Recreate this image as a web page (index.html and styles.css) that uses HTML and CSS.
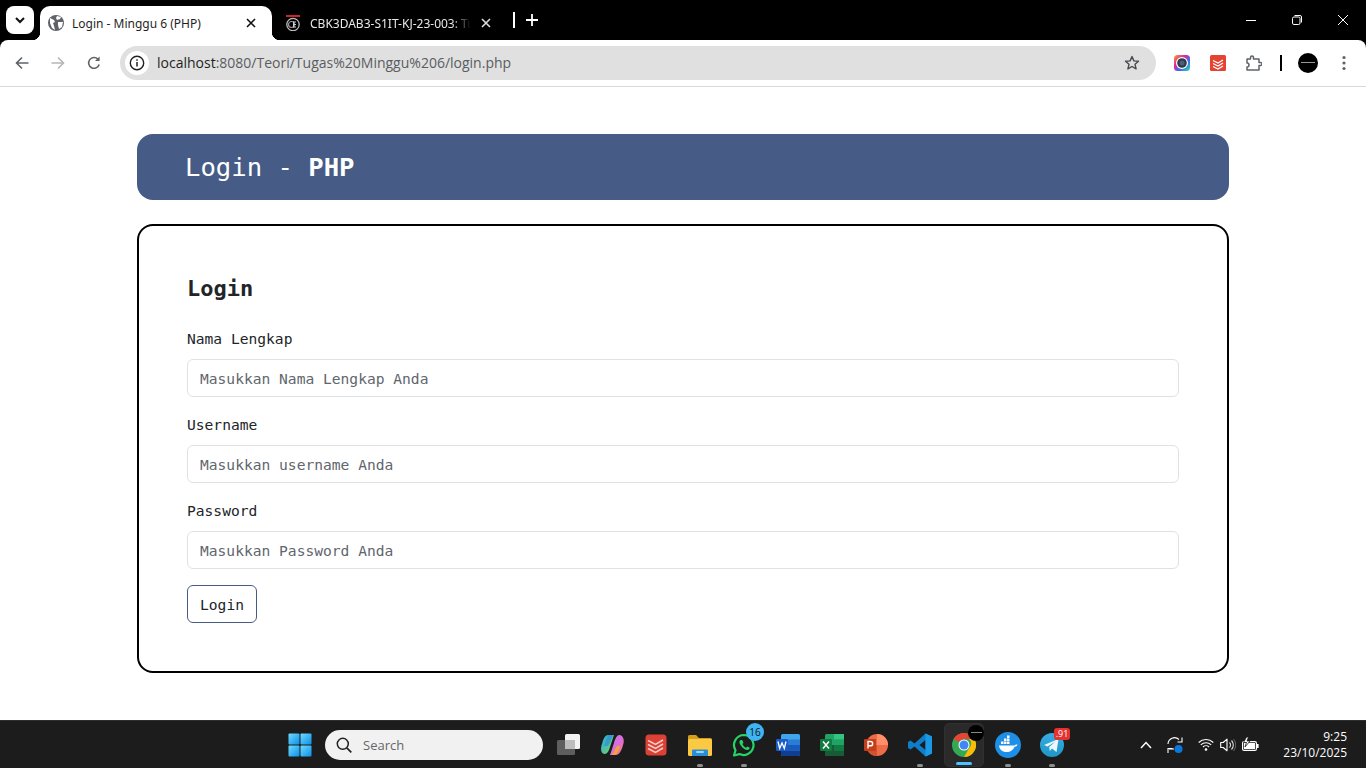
FILE: index.html
```html
<!DOCTYPE html>
<html lang="id">
<head>
<meta charset="utf-8">
<title>Login - Minggu 6 (PHP)</title>
<link rel="stylesheet" href="styles.css">
</head>
<body>
<div class="browser">
  <div class="tabstrip">
    <div class="tabsearch"><svg width="12" height="12" viewBox="0 0 12 12"><path d="M2 4l4 4 4-4" fill="none" stroke="#111" stroke-width="2"/></svg></div>
    <div class="tab active">
      <svg class="fav" width="16" height="16" viewBox="0 0 16 16"><circle cx="8" cy="8" r="8" fill="#5f6368"/><path d="M2 3l4 2 1 2-2 1 1 3 1 4-3-2-2-5zM9 1l4 1-1 2-3 1-1-2zM10 7l5 0-1 5-3 2-1-4z" fill="#fff"/></svg>
      <span class="tabtitle">Login - Minggu 6 (PHP)</span>
      <svg class="close" width="10" height="10" viewBox="0 0 10 10"><path d="M1 1l8 8M9 1l-8 8" stroke="#111" stroke-width="1.6"/></svg>
    </div>
    <div class="tab other">
      <svg class="fav" width="16" height="16" viewBox="0 0 16 16"><rect x="1" y="0" width="14" height="2" fill="#c8252c"/><circle cx="8" cy="9.5" r="6.2" fill="none" stroke="#bbb" stroke-width="1.3"/><circle cx="6.5" cy="9.5" r="3" fill="none" stroke="#999" stroke-width="1.2"/><path d="M8.5 6.5v6M8.5 7h2.5M8.5 9.5h2.5M8.5 12h2.5" stroke="#ccc" stroke-width="1"/></svg>
      <span class="tabtitle fade">CBK3DAB3-S1IT-KJ-23-003: Tugas</span>
      <svg class="close" width="10" height="10" viewBox="0 0 10 10"><path d="M1 1l8 8M9 1l-8 8" stroke="#ddd" stroke-width="1.6"/></svg>
    </div>
    <div class="tabsep"></div>
    <svg class="newtab" width="12" height="12" viewBox="0 0 12 12"><path d="M6 0v12M0 6h12" stroke="#fff" stroke-width="1.8"/></svg>
    <div class="winctl">
      <svg width="10" height="10" viewBox="0 0 10 10"><path d="M0 5.5h10" stroke="#fff" stroke-width="1"/></svg>
      <svg width="10" height="10" viewBox="0 0 10 10"><rect x=".5" y="2" width="7.5" height="7.5" rx="1.4" fill="none" stroke="#fff"/><path d="M2.5 .5h5.5a1.5 1.5 0 0 1 1.5 1.5v5.5" fill="none" stroke="#fff"/></svg>
      <svg width="10" height="10" viewBox="0 0 10 10"><path d="M0 0l10 10M10 0l-10 10" stroke="#fff" stroke-width="1"/></svg>
    </div>
  </div>
  <div class="toolbar">
    <div class="nav">
      <svg width="16" height="16" viewBox="0 0 16 16"><path d="M14.5 8H2.5M8 2.5L2.5 8 8 13.5" fill="none" stroke="#5f6368" stroke-width="1.6"/></svg>
      <svg width="16" height="16" viewBox="0 0 16 16"><path d="M1.5 8h12M8 2.5L13.5 8 8 13.5" fill="none" stroke="#b4b6b9" stroke-width="1.6"/></svg>
      <svg width="16" height="16" viewBox="0 0 16 16"><path d="M13.2 9.5A5.4 5.4 0 1 1 12 4.2" fill="none" stroke="#5f6368" stroke-width="1.6"/><path d="M13.6 1.5v4.6H9z" fill="#5f6368"/></svg>
    </div>
    <div class="omnibox">
      <div class="siteinfo"><svg width="16" height="16" viewBox="0 0 16 16"><circle cx="8" cy="8" r="6.7" fill="none" stroke="#222" stroke-width="1.4"/><path d="M8 7v4.5M8 4.2v1.6" stroke="#222" stroke-width="1.5"/></svg></div>
      <span class="url"><span class="host">localhost</span>:8080/Teori/Tugas%20Minggu%206/login.php</span>
      <svg class="star" width="16" height="16" viewBox="0 0 16 16"><path d="M8 1.6l1.9 4.3 4.6.4-3.5 3 1.1 4.6L8 11.5l-4.100 2.400 1.100-4.600-3.500-3 4.600-.4z" fill="none" stroke="#474a4e" stroke-width="1.4" stroke-linejoin="round"/></svg>
    </div>
    <div class="exts">
      <svg width="16" height="16" viewBox="0 0 16 16"><defs><linearGradient id="rb" x1="0" y1="0" x2="1" y2="1"><stop offset="0" stop-color="#f5a623"/><stop offset=".35" stop-color="#e6259b"/><stop offset=".65" stop-color="#3b6cf0"/><stop offset="1" stop-color="#2ee0a0"/></linearGradient></defs><rect width="16" height="16" rx="3.500" fill="url(#rb)"/><circle cx="8" cy="8" r="6" fill="#fff"/><circle cx="8" cy="8" r="4.800" fill="#2c3a4a"/><circle cx="8" cy="8" r="2.500" fill="#4b6076"/></svg>
      <svg width="16" height="16" viewBox="0 0 16 16"><rect width="16" height="16" rx="1.500" fill="#e44232"/><path d="M3 5.500l5 2.500 5-3M3 8.500l5 2.500 5-3M3 11.500l5 2.500 5-3" fill="none" stroke="#fff" stroke-width="1.200"/></svg>
      <svg width="16" height="16" viewBox="0 0 16 16"><path d="M1 4h3.500V2.500a1.500 1.500 0 0 1 3 0V4H13v3.500h1.500a1.500 1.500 0 0 1 0 3H13V15H1v-3a2 2 0 0 0 0-4z" fill="none" stroke="#5f6368" stroke-width="1.500" stroke-linejoin="round"/></svg>
      <div class="extsep"></div>
      <div class="avatar"><i></i></div>
      <svg width="4" height="16" viewBox="0 0 4 16"><circle cx="2" cy="2.500" r="1.600" fill="#5f6368"/><circle cx="2" cy="8" r="1.600" fill="#5f6368"/><circle cx="2" cy="13.500" r="1.600" fill="#5f6368"/></svg>
    </div>
  </div>
</div>

<main class="page">
  <div class="container">
    <header class="banner">Login - <b>PHP</b></header>
    <section class="card">
      <h2>Login</h2>
      <form>
        <label for="nama">Nama Lengkap</label>
        <input id="nama" type="text" placeholder="Masukkan Nama Lengkap Anda">
        <label for="user">Username</label>
        <input id="user" type="text" placeholder="Masukkan username Anda">
        <label for="pass">Password</label>
        <input id="pass" type="password" placeholder="Masukkan Password Anda">
        <button type="button">Login</button>
      </form>
    </section>
  </div>
</main>

<footer class="taskbar">
  <div class="slot">
    <svg width="24" height="24" viewBox="0 0 24 24"><defs><linearGradient id="win" x1="0" y1="0" x2="1" y2="1"><stop offset="0" stop-color="#6fdcff"/><stop offset="1" stop-color="#0c8fe8"/></linearGradient></defs><rect x="0.500" y="0.500" width="11" height="11" rx="1" fill="url(#win)"/><rect x="12.500" y="0.500" width="11" height="11" rx="1" fill="url(#win)"/><rect x="0.500" y="12.500" width="11" height="11" rx="1" fill="url(#win)"/><rect x="12.500" y="12.500" width="11" height="11" rx="1" fill="url(#win)"/></svg>
  </div>
  <div class="search">
    <svg width="16" height="16" viewBox="0 0 16 16"><circle cx="6.800" cy="6.800" r="5.500" fill="none" stroke="#222" stroke-width="1.500"/><path d="M10.800 10.800l4.500 4.500" stroke="#222" stroke-width="1.700"/></svg>
    <span>Search</span>
  </div>
  <div class="slot">
    <svg width="24" height="24" viewBox="0 0 24 24"><rect x="9" y="1" width="15" height="15" rx="1.500" fill="#f3f3f3"/><rect x="1" y="7" width="18" height="15" rx="1.500" fill="#5e5e5e"/><rect x="9" y="7" width="10" height="9" fill="#bdbdbd"/></svg>
  </div>
  <div class="slot">
    <svg width="24" height="24" viewBox="0 0 24 24"><defs><linearGradient id="cp1" x1="0" y1="0" x2="1" y2="1"><stop offset="0" stop-color="#1fa8e8"/><stop offset="1" stop-color="#7ed957"/></linearGradient><linearGradient id="cp2" x1="0" y1="0" x2="1" y2="1"><stop offset="0" stop-color="#b27cf5"/><stop offset=".6" stop-color="#e36bd2"/><stop offset="1" stop-color="#f9893b"/></linearGradient></defs><path d="M8 2h6l-4 12c-1 4-3 7-5 7-4 0-5-5-3-10C3 6 5 2 8 2z" fill="url(#cp1)"/><path d="M16 22h-6l4-12c1-4 3-8 5-8 4 0 6 5 4 10-1 5-4 10-7 10z" fill="url(#cp2)"/><path d="M8 2h7c-2 0-3 2-4 5l-3 6H4z" fill="#2a7de8" opacity=".55"/><path d="M11 21c2 0 3-2 4-5l2-3h3c-1 4-3 9-6 9z" fill="#f5a13b"/></svg>
  </div>
  <div class="slot">
    <svg width="22" height="22" viewBox="0 0 22 22"><rect width="21" height="21" x=".500" y=".500" rx="3.500" fill="#dd4035"/><path d="M3 6.500l7.500 4 7.500-4.500M3 10.500l7.500 4 7.500-4.500M3 14.500l7.500 4 7.500-4.500" fill="none" stroke="#f6cfc9" stroke-width="1.500"/></svg>
  </div>
  <div class="slot open">
    <svg width="24" height="22" viewBox="0 0 24 22"><path d="M0 2.500A1.500 1.500 0 0 1 1.500 1H8l3 3h11.500A1.500 1.500 0 0 1 24 5.500V9H0z" fill="#d39e1d"/><rect y="5" width="24" height="17" rx="1.500" fill="#fbc943"/><path d="M5 15.500h14a1 1 0 0 1 1 1V22H4v-5.500a1 1 0 0 1 1-1z" fill="#2a8ed4"/><rect x="8" y="17" width="8" height="2" rx="1" fill="#9bd4f5"/></svg>
  </div>
  <div class="slot open">
    <svg width="24" height="24" viewBox="0 0 24 24"><path d="M12 2a10 10 0 0 0-8.500 15.200L2 22.500l5.400-1.400A10 10 0 1 0 12 2z" fill="#1c1c1c" stroke="#25d366" stroke-width="2.200" stroke-linejoin="round"/><path d="M8.500 7c-1.500 1-1.500 3 .3 5.500 2 3 5 4.500 6.500 4.500 1.300 0 2.500-1 2.500-2.200l-2.500-1.300-1.200 1.200c-1.500-.5-3-2-3.700-3.700l1.100-1.200L10.200 7z" fill="#25d366"/></svg>
    <span class="badge blue">16</span>
  </div>
  <div class="slot">
    <svg width="24" height="22" viewBox="0 0 24 22"><rect x="5" y="0" width="19" height="22" rx="1.500" fill="#41a5ee"/><rect x="5" y="5.500" width="19" height="5.500" fill="#2b7cd3"/><rect x="5" y="11" width="19" height="5.500" fill="#185abd"/><path d="M5 16.500h19v4a1.500 1.500 0 0 1-1.500 1.500h-16A1.500 1.500 0 0 1 5 20.500z" fill="#103f91"/><rect x="0" y="5" width="12" height="12" rx="1.200" fill="#1a5cc8"/><path d="M2 7.500l1.700 7 2.300-5.500 2.300 5.500 1.700-7" fill="none" stroke="#fff" stroke-width="1.300"/></svg>
  </div>
  <div class="slot">
    <svg width="24" height="22" viewBox="0 0 24 22"><rect x="5" y="0" width="19" height="22" rx="1.500" fill="#21a366"/><rect x="14" y="0" width="10" height="5.500" fill="#33c481"/><rect x="14" y="5.500" width="10" height="5.500" fill="#21a366"/><rect x="5" y="11" width="9" height="11" fill="#185c37"/><rect x="14" y="11" width="10" height="5.500" fill="#107c41"/><rect x="14" y="16.500" width="10" height="5.500" fill="#185c37"/><rect x="0" y="5" width="12" height="12" rx="1.200" fill="#107c41"/><path d="M3 7.500l6 7M9 7.500l-6 7" stroke="#fff" stroke-width="1.500"/></svg>
  </div>
  <div class="slot">
    <svg width="24" height="22" viewBox="0 0 24 22"><circle cx="13" cy="11" r="11" fill="#ed6c47"/><path d="M13 0a11 11 0 0 1 11 11H13z" fill="#ff8f6b"/><path d="M13 11v11a11 11 0 0 1-9.500-5.500z" fill="#d35230"/><rect x="0" y="5" width="12" height="12" rx="1.200" fill="#c43e1c"/><path d="M4 14.500v-7h2.500a2.100 2.100 0 0 1 0 4.300H4" fill="none" stroke="#fff" stroke-width="1.400"/></svg>
  </div>
  <div class="slot open">
    <svg width="24" height="24" viewBox="0 0 24 24"><path d="M17.500 0.500L24 3.500v17l-6.500 3L6.500 13.500 2.500 16.500 0 15V9l2.500-1.500 4 3zM17.500 7l-6 5 6 5z" fill="#0e7ecb" fill-rule="evenodd"/><path d="M17.500.5L24 3.500v17l-6.500 3z" fill="#1a9ae6"/></svg>
  </div>
  <div class="slot current">
    <svg width="24" height="24" viewBox="0 0 24 24"><circle cx="12" cy="12" r="12" fill="#34a853"/><path d="M12 0a12 12 0 0 1 10.400 6H12a6 6 0 0 0-5.200 3L1.600 6A12 12 0 0 1 12 0z" fill="#ea4335"/><path d="M22.400 6A12 12 0 0 1 12 24l5.200-9a6 6 0 0 0 0-9z" fill="#fbbc04"/><circle cx="12" cy="12" r="5.500" fill="#fff"/><circle cx="12" cy="12" r="4.500" fill="#4285f4"/></svg>
    <span class="miniavatar"><i></i></span>
  </div>
  <div class="slot open">
    <svg width="26" height="26" viewBox="0 0 26 26"><circle cx="13" cy="13" r="13" fill="#1d8fe6"/><path d="M4 13.500h15.500c.8-1 2-1.200 3-.8-.5 1.300-1.500 2-3 2-1 3-4 5.300-8 5.300-4.500 0-7-2.500-7.500-6.500z" fill="#fff"/><path d="M6 9.500h2.500V12H6zM9 9.500h2.500V12H9zM12 9.500h2.500V12H12zM9 6.500h2.500V9H9zM12 6.500h2.500V9H12zM12 3.500h2.500V6H12z" fill="#fff"/></svg>
  </div>
  <div class="slot open">
    <svg width="24" height="24" viewBox="0 0 24 24"><defs><linearGradient id="tg" x1="0" y1="0" x2="0" y2="1"><stop offset="0" stop-color="#37aee2"/><stop offset="1" stop-color="#1e96c8"/></linearGradient></defs><circle cx="12" cy="12" r="12" fill="url(#tg)"/><path d="M4 12l14.500-6-2 13-4.500-3.500-2.200 2.500-.6-4 6.300-5.500-8 5z" fill="#eef7fc"/></svg>
    <span class="badge red">.91</span>
  </div>
  <div class="tray">
    <svg width="12" height="8" viewBox="0 0 12 8"><path d="M1 7l5-5.500L11 7" fill="none" stroke="#fff" stroke-width="1.500"/></svg>
    <div class="syncicon">
      <svg width="18" height="18" viewBox="0 0 18 18"><path d="M2 8A6.500 6.500 0 0 1 13 3.500M14.500 10.500M3 13h5M16 1.500V6h-4.500" fill="none" stroke="#fff" stroke-width="1.100"/><path d="M2 17v-4.500h4.500" fill="none" stroke="#fff" stroke-width="1.100"/><circle cx="12.500" cy="13" r="4" fill="#0a78dc"/></svg>
    </div>
    <div class="status">
      <svg width="16" height="13" viewBox="0 0 16 13"><path d="M.7 4.500a10.500 10.500 0 0 1 14.600 0M2.800 6.800a7.500 7.500 0 0 1 10.400 0M5 9a4.300 4.300 0 0 1 6 0" fill="none" stroke="#fff" stroke-width="1.100"/><circle cx="8" cy="11.500" r="1.300" fill="#fff"/></svg>
      <svg width="16" height="14" viewBox="0 0 16 14"><path d="M.7 4.500h2.500L7 1.200v11.600L3.200 9.500H.7z" fill="none" stroke="#fff" stroke-width="1.100" stroke-linejoin="round"/><path d="M9.500 4.500a3.500 3.500 0 0 1 0 5M11.500 2.500a6.500 6.500 0 0 1 0 9" fill="none" stroke="#ddd" stroke-width="1.100"/><path d="M13.500 1a9 9 0 0 1 0 12" fill="none" stroke="#666" stroke-width="1"/></svg>
      <svg width="17" height="15" viewBox="0 0 17 15"><rect x=".6" y="4.600" width="13.800" height="8.800" rx="1.500" fill="none" stroke="#fff" stroke-width="1.200"/><rect x="2" y="6" width="11" height="6" fill="#fff"/><rect x="15" y="7" width="1.600" height="4" fill="#fff"/><path d="M4.500 0L1.500 5.500h3L3 10l5-6H5l1.500-4z" fill="#fff" stroke="#1c1c1c" stroke-width=".8"/></svg>
    </div>
    <div class="clock"><span>9:25</span><span>23/10/2025</span></div>
  </div>
</footer>
</body>
</html>
```

FILE: styles.css
```css
* { box-sizing: border-box; }
html, body { margin: 0; height: 100%; }
body {
  width: 1366px;
  height: 768px;
  overflow: hidden;
  display: flex;
  flex-direction: column;
  background: #fff;
  font-family: "DejaVu Sans Mono", monospace;
  color: #212529;
}

/* browser chrome */
.browser { flex: none; background: #000; }
.tabstrip { height: 40px; display: flex; align-items: flex-end; position: relative; }
.tabsearch {
  width: 28px; height: 28px; margin: 0 6px 6px 6px;
  background: #fff; border-radius: 8px;
  display: flex; align-items: center; justify-content: center;
}
.tab {
  height: 34px; display: flex; align-items: center;
  font: 12px "Noto Sans", "Open Sans", sans-serif;
  position: relative;
}
.tab.active {
  width: 232px; padding: 0 16px 0 8px; background: #fff; color: #1f1f1f;
  border-radius: 10px 10px 0 0;
}
.tab.active::before, .tab.active::after {
  content: ""; position: absolute; bottom: 0; width: 8px; height: 8px;
}
.tab.active::before { left: -8px; background: radial-gradient(circle at 0 0, transparent 8px, #fff 8.500px); }
.tab.active::after { right: -8px; background: radial-gradient(circle at 100% 0, transparent 8px, #fff 8.500px); }
.tab.other { width: 234px; padding: 0 15px 0 13px; color: #e8e8e8; }
.fav { flex: none; margin-right: 8px; }
.tab.other .fav { margin-right: 9px; }
.tabtitle { flex: 1; white-space: nowrap; overflow: hidden; }
.tabtitle.fade { -webkit-mask-image: linear-gradient(90deg, #000 88%, transparent 100%); mask-image: linear-gradient(90deg, #000 88%, transparent 100%); margin-right: 10px; }
.close { flex: none; }
.tabsep { width: 2px; height: 16px; background: #fff; margin: 0 0 12px 7px; }
.newtab { margin: 0 0 14px 11px; }
.winctl { margin: 0 0 0 auto; align-self: stretch; display: flex; align-items: center; padding-right: 18px; gap: 36px; }

.toolbar {
  height: 47px; background: #fff; border-radius: 8px 8px 0 0;
  border-bottom: 1px solid #d9d9d9;
  display: flex; align-items: center; padding-bottom: 1px;
}
.nav { width: 120px; padding-left: 14px; display: flex; gap: 20px; flex: none; }
.omnibox {
  width: 1036px; height: 34px; background: #e0e0e0; border-radius: 17px;
  display: flex; align-items: center; padding: 0 16px 0 5px; flex: none;
}
.siteinfo {
  width: 24px; height: 24px; border-radius: 50%; background: #fff;
  display: flex; align-items: center; justify-content: center; margin-right: 8px;
}
.url { font: 14px "Open Sans", "Noto Sans", sans-serif; color: #5a5d61; flex: 1; white-space: nowrap; }
.host { color: #1f1f1f; }
.exts { flex: 1; display: flex; align-items: center; padding-left: 18px; }
.exts > svg:nth-child(1) { margin-right: 20px; }
.exts > svg:nth-child(2) { margin-right: 20px; }
.extsep { width: 2px; height: 16px; background: #000; margin: 0 16px 0 18px; }
.avatar {
  width: 20px; height: 20px; border-radius: 50%; background: #000;
  display: flex; align-items: center; justify-content: center; margin-right: 24px;
}
.avatar i { width: 14px; height: 1px; background: #999; }

/* page */
.page { flex: 1; min-height: 0; padding-top: 47px; }
.container { width: 1092px; margin: 0 auto; }
.banner {
  height: 66px; background: #465c86; color: #fff; border-radius: 16px;
  padding: 0 48px; font-size: 25.6px; line-height: 66px;
}
.banner b { font-weight: 700; }
.card {
  margin-top: 24px; height: 449px; border: 2px solid #000; border-radius: 16px;
  padding: 48px;
}
h2 { margin: 0 0 24px; font-size: 22px; line-height: 29px; font-weight: 700; height: 29px; }
form { display: block; }
label { display: block; font-size: 14.6px; line-height: 24px; margin-bottom: 8px; color: #212529; }
input {
  display: block; width: 100%; height: 38px; margin-bottom: 16px;
  border: 1px solid #dee2e6; border-radius: 6px; padding: 0 12px;
  font: 14.6px "DejaVu Sans Mono", monospace; color: #212529; background: #fff; outline: none;
}
input::placeholder { color: #5f666d; opacity: 1; }
button {
  display: block; width: 70px; height: 38px; padding: 0;
  border: 1px solid #465c86; border-radius: 6px; background: #fff;
  font: 14.6px "DejaVu Sans Mono", monospace; color: #212529;
}

/* taskbar */
.taskbar {
  flex: none; height: 48px; background: #1c1c1c; border-top: 1px solid #2e2e2e;
  display: flex; align-items: center; padding: 0 19px 0 278px;
}
.slot {
  width: 44px; height: 44px; flex: none; position: relative;
  display: flex; align-items: center; justify-content: center;
}
.slot.open::after, .slot.current::after {
  content: ""; position: absolute; bottom: 0; left: 50%;
  width: 6px; height: 3px; margin-left: -3px; border-radius: 2px; background: #8e8e8e;
}
.slot.current { background: #2a2a2a; border-radius: 5px; border: 1px solid #303030; width: 40px; margin: 0 2px; }
.slot.current::after { width: 16px; margin-left: -8px; background: #4cc2ff; bottom: 1px; }
.search {
  width: 218px; height: 30px; margin: 0 3px; flex: none; background: #f1f1f1; border-radius: 15px;
  display: flex; align-items: center; padding-left: 11px; gap: 11px;
  font: 13px "Open Sans", "Noto Sans", sans-serif; color: #666;
}
.badge {
  position: absolute; font: 10px/14px "Open Sans", "Noto Sans", sans-serif; color: #fff; text-align: center;
}
.badge.blue { width: 18px; height: 18px; line-height: 18px; border-radius: 50%; background: #3fb4f2; color: #111; top: 0; right: 2px; }
.badge.red { height: 12px; line-height: 12px; width: 16px; font-size: 9px; border-radius: 3px; background: #e5312f; top: 5px; right: 4px; }
.miniavatar {
  position: absolute; top: 1px; right: -1px; width: 16px; height: 16px; border-radius: 50%; background: #000;
  display: flex; align-items: center; justify-content: center;
}
.miniavatar i { width: 11px; height: 1px; background: #888; }
.tray { margin-left: auto; display: flex; align-items: center; }
.syncicon { margin-left: 14px; display: flex; }
.status { display: flex; align-items: center; gap: 6px; margin-left: 14px; }
.clock {
  display: flex; flex-direction: column; align-items: flex-end; margin-left: 24px;
  font: 12px/16px "Open Sans", "Noto Sans", sans-serif; color: #fff;
}
```
